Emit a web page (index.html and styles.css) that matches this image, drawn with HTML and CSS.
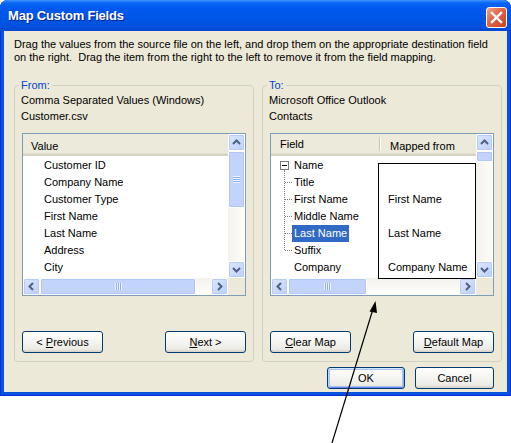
FILE: index.html
```html
<!DOCTYPE html>
<html lang="en">
<head>
    <meta charset="UTF-8">
    <title>Map Custom Fields</title>
    <link rel="stylesheet" href="styles.css">
</head>
<body>
    <div class="window">
        <div class="titlebar">
            <span class="title">Map Custom Fields</span>
            <span class="close">
                <svg width="13" height="13" viewBox="0 0 13 13"><path d="M2 2 L11 11 M11 2 L2 11" stroke="#fff" stroke-width="2.4" stroke-linecap="square"/></svg>
            </span>
        </div>
        <div class="client">
            <p class="intro">Drag the values from the source file on the left, and drop them on the appropriate destination field<br>on the right.&nbsp; Drag the item from the right to the left to remove it from the field mapping.</p>

            <div class="groups">
                <fieldset class="group">
                    <legend>From:</legend>
                    <div class="source">Comma Separated Values (Windows)</div>
                    <div class="source">Customer.csv</div>
                    <div class="listbox">
                        <div class="list-area">
                            <div class="header"><span class="col">Value</span></div>
                            <div class="rows">
                                <div class="row">Customer ID</div>
                                <div class="row">Company Name</div>
                                <div class="row">Customer Type</div>
                                <div class="row">First Name</div>
                                <div class="row">Last Name</div>
                                <div class="row">Address</div>
                                <div class="row">City</div>
                            </div>
                        </div>
                        <div class="vscroll">
                            <span class="sbtn"><svg width="15" height="15" viewBox="0 0 15 15"><path d="M4 9 L7.5 5.5 L11 9" fill="none" stroke="#4D6185" stroke-width="2"/></svg></span>
                            <span class="thumb vthumb-long"><i class="grip-v"></i></span>
                            <span class="track"></span>
                            <span class="sbtn"><svg width="15" height="15" viewBox="0 0 15 15"><path d="M4 6 L7.5 9.5 L11 6" fill="none" stroke="#4D6185" stroke-width="2"/></svg></span>
                        </div>
                        <div class="hscroll">
                            <span class="sbtn"><svg width="15" height="15" viewBox="0 0 15 15"><path d="M9 4 L5.5 7.5 L9 11" fill="none" stroke="#4D6185" stroke-width="2"/></svg></span>
                            <span class="thumb hthumb-long"><i class="grip-h"></i></span>
                            <span class="track"></span>
                            <span class="sbtn"><svg width="15" height="15" viewBox="0 0 15 15"><path d="M6 4 L9.5 7.5 L6 11" fill="none" stroke="#4D6185" stroke-width="2"/></svg></span>
                        </div>
                        <div class="corner"></div>
                    </div>
                    <div class="group-buttons">
                        <button class="btn">&lt; <u>P</u>revious</button>
                        <button class="btn"><u>N</u>ext &gt;</button>
                    </div>
                </fieldset>

                <fieldset class="group">
                    <legend>To:</legend>
                    <div class="source">Microsoft Office Outlook</div>
                    <div class="source">Contacts</div>
                    <div class="listbox mapping">
                        <div class="list-area">
                            <div class="header">
                                <span class="col col-field">Field</span>
                                <span class="col col-mapped">Mapped from</span>
                            </div>
                            <div class="rows tree">
                                <div class="row node"><span class="expander"></span>Name</div>
                                <div class="children">
                                    <div class="row leaf">Title</div>
                                    <div class="row leaf">First Name</div>
                                    <div class="row leaf">Middle Name</div>
                                    <div class="row leaf"><span class="selected">Last Name</span></div>
                                    <div class="row leaf">Suffix</div>
                                </div>
                                <div class="row node">Company</div>
                            </div>
                        </div>
                        <div class="vscroll">
                            <span class="sbtn"><svg width="15" height="15" viewBox="0 0 15 15"><path d="M4 9 L7.5 5.5 L11 9" fill="none" stroke="#4D6185" stroke-width="2"/></svg></span>
                            <span class="thumb vthumb-short"></span>
                            <span class="track"></span>
                            <span class="sbtn"><svg width="15" height="15" viewBox="0 0 15 15"><path d="M4 6 L7.5 9.5 L11 6" fill="none" stroke="#4D6185" stroke-width="2"/></svg></span>
                        </div>
                        <div class="hscroll">
                            <span class="sbtn"><svg width="15" height="15" viewBox="0 0 15 15"><path d="M9 4 L5.5 7.5 L9 11" fill="none" stroke="#4D6185" stroke-width="2"/></svg></span>
                            <span class="thumb hthumb-short"><i class="grip-h"></i></span>
                            <span class="track"></span>
                            <span class="sbtn"><svg width="15" height="15" viewBox="0 0 15 15"><path d="M6 4 L9.5 7.5 L6 11" fill="none" stroke="#4D6185" stroke-width="2"/></svg></span>
                        </div>
                        <div class="corner"></div>

                        <div class="mapped-box">
                            <div class="mrow"></div>
                            <div class="mrow">First Name</div>
                            <div class="mrow"></div>
                            <div class="mrow">Last Name</div>
                            <div class="mrow"></div>
                            <div class="mrow">Company Name</div>
                        </div>
                    </div>
                    <div class="group-buttons">
                        <button class="btn"><u>C</u>lear Map</button>
                        <button class="btn"><u>D</u>efault Map</button>
                    </div>
                </fieldset>
            </div>

            <div class="footer">
                <button class="btn btn-ok">OK</button>
                <button class="btn btn-cancel">Cancel</button>
            </div>
        </div>
    </div>

    <svg class="pointer" width="511" height="443" viewBox="0 0 511 443">
        <line x1="332" y1="443" x2="373" y2="309" stroke="#000" stroke-width="1.2"/>
        <path d="M375.5 301 L369.5 311.5 L377 313 Z" fill="#000"/>
    </svg>
</body>
</html>
```

FILE: styles.css
```css
body {
    margin: 0;
    background: #fff;
    font-family: "Liberation Sans", Arial, sans-serif;
    font-size: 11px;
    color: #000;
    position: relative;
    height: 443px;
    overflow: hidden;
}
.window {
    width: 511px;
    box-sizing: border-box;
    background: #0651E0;
    border-radius: 8px 8px 0 0;
    padding-bottom: 4px;
    box-shadow: inset 1px 0 0 #0831D9, inset -1px 0 0 #0831D9, inset 0 -1px 0 #0831D9;
}
.titlebar {
    height: 31px;
    display: flex;
    align-items: center;
    justify-content: space-between;
    padding: 0 4px 0 8px;
    border-radius: 8px 8px 0 0;
    background: linear-gradient(#3D95FF 0, #0A66F5 3px, #0058EE 9px, #0055E5 20px, #0050DC 27px, #0347D0 31px);
}
.title {
    color: #fff;
    font-weight: bold;
    font-size: 13px;
    letter-spacing: -0.2px;
    text-shadow: 1px 1px 0 #0A1E8C;
    margin-top: -1px;
}
.close {
    width: 21px;
    height: 21px;
    box-sizing: border-box;
    border: 1px solid #fff;
    border-radius: 3px;
    background: linear-gradient(135deg, #F0A58A 0, #E2694A 40%, #C8401F 100%);
    display: flex;
    align-items: center;
    justify-content: center;
    margin-top: 4px;
}
.client {
    margin: 0 4px;
    background: #ECE9D8;
    padding: 7px 5px 3px 10px;
}
.intro {
    margin: 0;
    line-height: 13px;
}
.groups {
    display: flex;
    gap: 8px;
    margin-top: 15px;
}
.group {
    width: 240px;
    box-sizing: border-box;
    margin: 0;
    padding: 0 7px 8px 7px;
    border: 1px solid #D0D0BF;
    border-radius: 4px;
}
.group legend {
    color: #0046D5;
    padding: 0 2px;
    margin-left: -3px;
    line-height: 13px;
}
.source {
    line-height: 16px;
    margin-left: -1px;
}
.listbox {
    position: relative;
    margin-top: 9px;
    border: 1px solid #7F9DB9;
    background: #fff;
    display: grid;
    grid-template-columns: 1fr 17px;
    grid-template-rows: 144px 17px;
}
.list-area {
    overflow: hidden;
}
.header {
    height: 22px;
    box-sizing: border-box;
    padding-top: 3px;
    background: #EBEADB;
    border-bottom: 2px solid #D6D2C2;
    box-shadow: 0 -1px 0 #E2DECD inset;
    display: flex;
    align-items: center;
    margin-bottom: 1px;
}
.col {
    padding-left: 8px;
}
.col-field {
    width: 109px;
    box-sizing: border-box;
    padding-left: 9px;
    align-self: stretch;
    display: flex;
    align-items: center;
    border-right: 1px solid #C7C5B2;
    box-shadow: 1px 0 0 #fff;
    margin: 0 0 3px;
}
.col-mapped {
    padding-left: 10px;
}
.row {
    height: 17px;
    line-height: 17px;
    padding-left: 21px;
    white-space: nowrap;
}
.tree .row {
    padding-left: 23px;
    position: relative;
}
.expander {
    position: absolute;
    left: 9px;
    top: 4px;
    width: 9px;
    height: 9px;
    box-sizing: border-box;
    border: 1px solid #7A7A7A;
    background: #fff;
}
.expander::after {
    content: "";
    position: absolute;
    left: 1px;
    top: 3px;
    width: 5px;
    height: 1px;
    background: #000;
}
.children {
    position: relative;
}
.children::before {
    content: "";
    position: absolute;
    left: 13px;
    top: -4px;
    height: 80px;
    border-left: 1px dotted #808080;
}
.leaf::before {
    content: "";
    position: absolute;
    left: 14px;
    top: 8px;
    width: 7px;
    border-top: 1px dotted #808080;
}
.selected {
    display: inline-block;
    margin-left: -2px;
    padding: 0 2px;
    background: #316AC5;
    color: #fff;
}
.vscroll {
    grid-row: 1;
    grid-column: 2;
    display: flex;
    flex-direction: column;
    background: linear-gradient(90deg, #F3F1EC, #FEFEFB);
}
.hscroll {
    grid-row: 2;
    grid-column: 1;
    display: flex;
    background: linear-gradient(#F3F1EC, #FEFEFB);
}
.corner {
    grid-row: 2;
    grid-column: 2;
    background: #ECE9D8;
}
.sbtn {
    width: 17px;
    height: 17px;
    flex: none;
    box-sizing: border-box;
    border: 1px solid #fff;
    border-radius: 2px;
    background: linear-gradient(135deg, #DCE6FD, #BCD0FA);
    box-shadow: inset 0 0 0 1px #B7CBF5;
    display: flex;
    align-items: center;
    justify-content: center;
}
.thumb {
    flex: none;
    box-sizing: border-box;
    border: 1px solid #fff;
    border-radius: 2px;
    background: #C3D4FC;
    box-shadow: inset 0 0 0 1px #B0C6F6;
    display: flex;
    align-items: center;
    justify-content: center;
}
.vthumb-long {
    height: 57px;
}
.vthumb-short {
    height: 11px;
}
.hthumb-long {
    width: 156px;
}
.hthumb-short {
    width: 79px;
}
.track {
    flex: 1;
}
.grip-v {
    width: 7px;
    height: 7px;
    background: repeating-linear-gradient(#EEF4FE 0, #EEF4FE 1px, #8CB0F8 1px, #8CB0F8 2px);
}
.grip-h {
    width: 7px;
    height: 7px;
    background: repeating-linear-gradient(90deg, #EEF4FE 0, #EEF4FE 1px, #8CB0F8 1px, #8CB0F8 2px);
}
.mapped-box {
    position: absolute;
    left: 107px;
    top: 29px;
    width: 98px;
    box-sizing: border-box;
    border: 1px solid #000;
    background: #fff;
    padding: 10px 0 2px 9px;
}
.mrow {
    height: 17px;
    line-height: 17px;
    white-space: nowrap;
}
.group-buttons {
    display: flex;
    justify-content: space-between;
    margin-top: 35px;
}
.btn {
    width: 81px;
    height: 22px;
    box-sizing: border-box;
    border: 1px solid #003C74;
    border-radius: 3px;
    background: linear-gradient(#FFFFFF 0, #F4F4F0 50%, #ECEBE6 85%, #D6D0C5 100%);
    font-family: "Liberation Sans", Arial, sans-serif;
    font-size: 11px;
    color: #000;
    padding: 0;
}
.footer {
    display: flex;
    justify-content: flex-end;
    gap: 10px;
    padding: 5px 8px 0 0;
}
.btn-ok {
    width: 78px;
    box-shadow: inset 0 1px 0 #CEE7FF, inset 1px 0 0 #BCD4F6, inset -1px 0 0 #89ADE4, inset 0 -1px 0 #6982EE, inset 0 0 0 2px #A9C4F0;
}
.btn-cancel {
    width: 79px;
}
.pointer {
    position: absolute;
    left: 0;
    top: 0;
    pointer-events: none;
}
```
